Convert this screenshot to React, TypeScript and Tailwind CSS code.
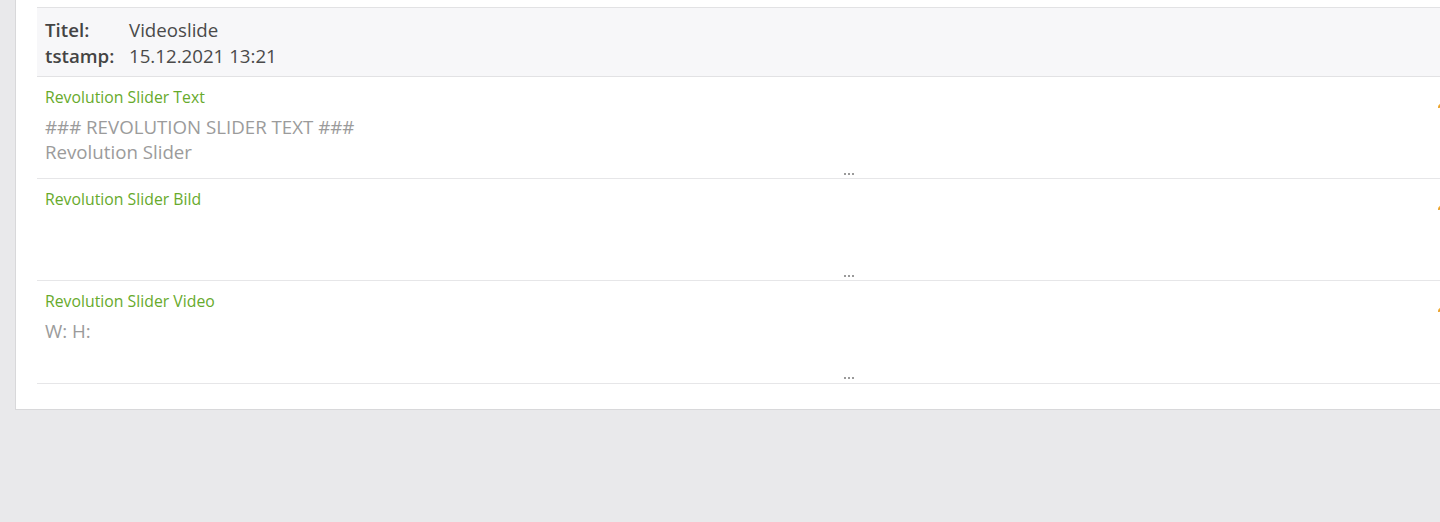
import React from "react";

const rows = [
  { title: "Revolution Slider Text", lines: ["### REVOLUTION SLIDER TEXT ###", "Revolution Slider"] },
  { title: "Revolution Slider Bild", lines: [] as string[] },
  { title: "Revolution Slider Video", lines: ["W: H:"] },
];

function Pencil() {
  return (
    <svg width="12" height="12" viewBox="0 0 12 12" className="absolute left-[1400px] top-[20px]">
      <path d="M1 11 L1.8 8 L8.5 1.3 L10.7 3.5 L4 10.2 Z" fill="#f5b43c" />
      <path d="M1 11 L1.8 8 L4 10.2 Z" fill="#e89a20" />
    </svg>
  );
}

export default function App() {
  return (
    <div
      className="w-[1440px] h-[522px] overflow-hidden bg-[#e9e9eb]"
      style={{ fontFamily: '"Open Sans", "Noto Sans", sans-serif' }}
    >
      <div className="ml-[15px] w-[1690px] bg-white border-x border-b border-[#d8d8da] pt-[7px] pb-[25px] pl-[21px]">
        <div className="w-[1624px] border-y border-[#e2e2e4] bg-[#f7f7f9] pl-2 pt-[9px] pb-[7px] text-[18.7px] leading-[26px] text-[#4a4a4a]">
          <div className="flex">
            <span className="w-[84px] font-semibold text-[#444]">Titel:</span>
            <span>Videoslide</span>
          </div>
          <div className="flex">
            <span className="w-[84px] font-semibold text-[#444]">tstamp:</span>
            <span>15.12.2021 13:21</span>
          </div>
        </div>
        {rows.map((r) => (
          <div key={r.title} className="relative w-[1624px] border-b border-[#e6e6e8] pt-[10px]">
            <Pencil />
            <div className="pl-2 text-[15.8px] leading-[20px] text-[#67aa2c]">{r.title}</div>
            <div className="pl-2 mt-[7px] h-[51px] text-[18.7px] leading-[25px] text-[#9b9b9b]">
              {r.lines.map((l) => (
                <div key={l}>{l}</div>
              ))}
            </div>
            <div className="h-[13.2px] flex items-start justify-center pt-[8px] gap-[2.3px]">
              <span className="w-[2px] h-[2px] bg-[#9a9a9a]" />
              <span className="w-[2px] h-[2px] bg-[#9a9a9a]" />
              <span className="w-[2px] h-[2px] bg-[#9a9a9a]" />
            </div>
          </div>
        ))}
      </div>
    </div>
  );
}
